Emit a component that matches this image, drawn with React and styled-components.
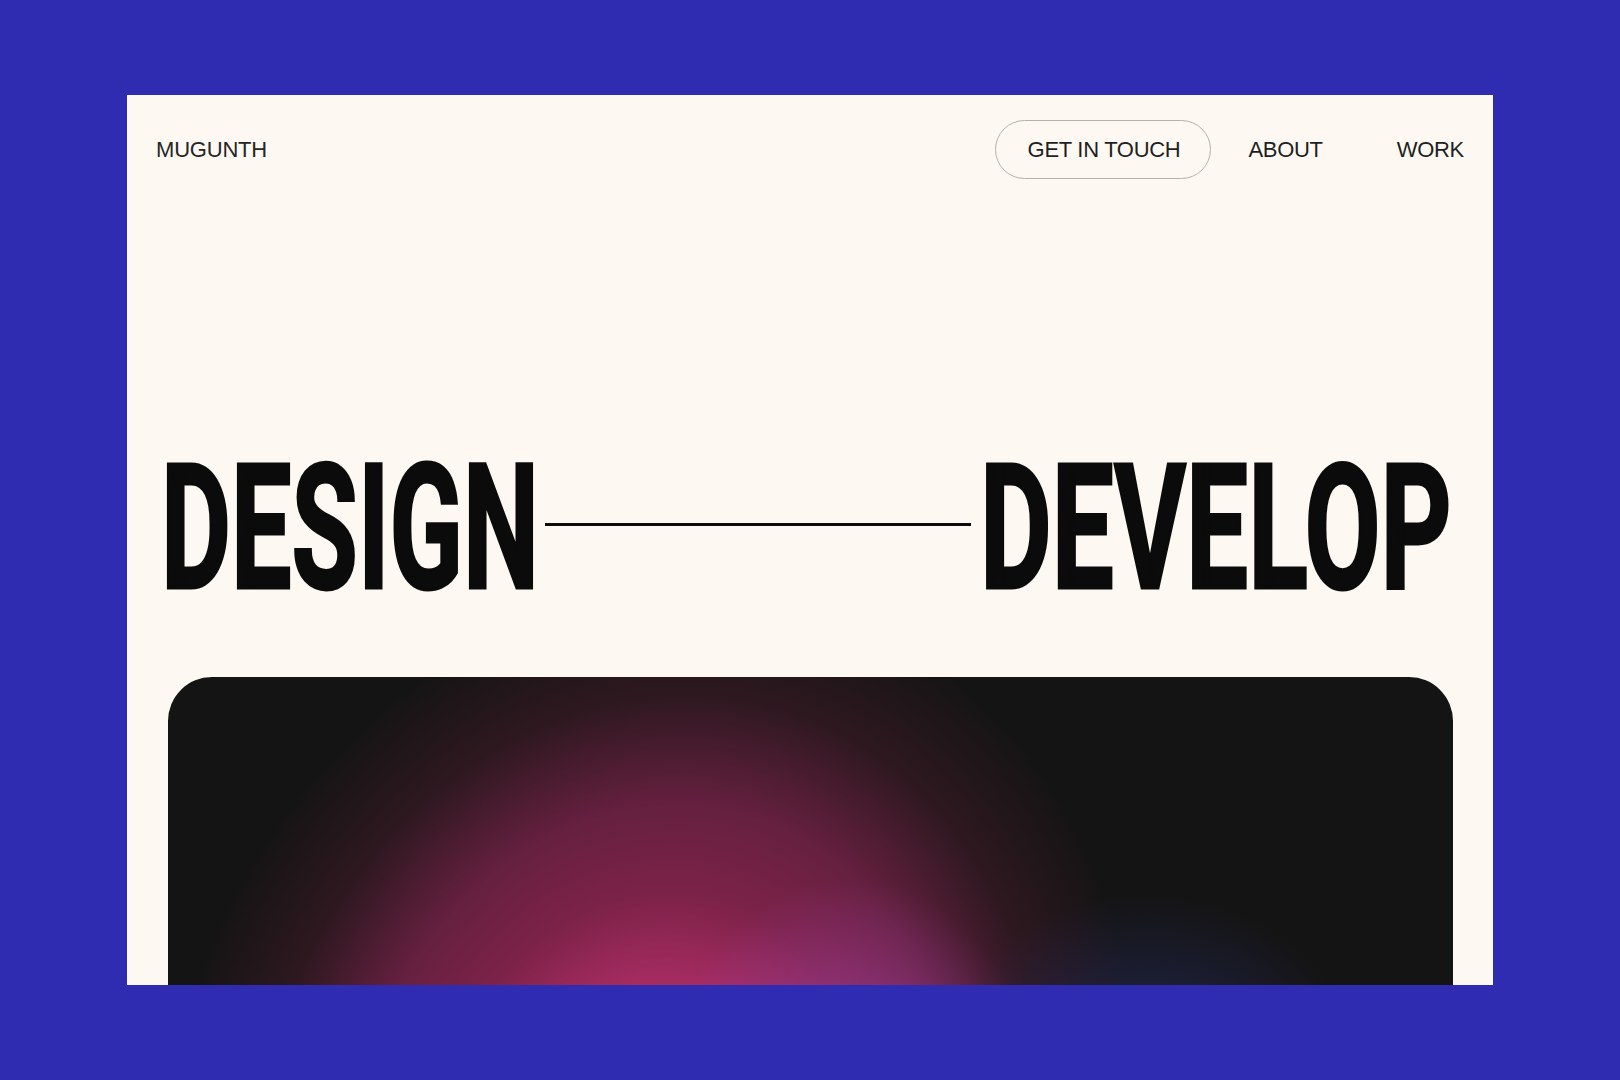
import { useLayoutEffect, useRef, useState } from "react";
import styled, { createGlobalStyle } from "styled-components";

const GlobalStyle = createGlobalStyle`
  html, body {
    margin: 0;
    padding: 0;
    background-color: #2f2cb1;
  }

  body {
    font-family: "Liberation Sans", Arial, sans-serif;
  }
`;

const Page = styled.div`
  box-sizing: border-box;
  width: 1620px;
  height: 1080px;
  padding: 95px 127px;
  background-color: #2f2cb1;
`;

const Card = styled.div`
  display: flex;
  flex-direction: column;
  height: 890px;
  background-color: #fdf9f2;
  overflow: hidden;
`;

const Header = styled.header`
  display: flex;
  align-items: center;
  justify-content: space-between;
  padding: 25px 29px 0 29px;
`;

const Logo = styled.a`
  font-size: 22px;
  letter-spacing: -0.2px;
  color: #262626;
  text-decoration: none;
`;

const Nav = styled.nav`
  display: flex;
  align-items: center;
`;

const PillLink = styled.a`
  box-sizing: border-box;
  display: flex;
  align-items: center;
  height: 59px;
  padding: 0 30px 0 32px;
  border: 1px solid #b9b1a8;
  border-radius: 30px;
  font-size: 22px;
  letter-spacing: -0.3px;
  color: #1f1f1f;
  text-decoration: none;
`;

const NavLink = styled.a`
  padding: 0 37px;
  font-size: 22px;
  letter-spacing: -0.3px;
  color: #1f1f1f;
  text-decoration: none;

  &:last-child {
    padding-right: 0;
  }
`;

const Headline = styled.h1`
  display: flex;
  align-items: center;
  margin: 262px 0 0;
  padding: 0 41px 0 34px;
`;

const WordBox = styled.span`
  display: block;
  flex: none;
  width: ${({ $width }) => $width}px;
  height: 176px;
  overflow: visible;
`;

const WordText = styled.span`
  display: inline-block;
  font-family: Roboto, "DejaVu Sans", sans-serif;
  font-weight: 700;
  font-size: 175px;
  line-height: 176px;
  color: #0b0b0b;
  white-space: nowrap;
  transform-origin: 0 0;
  -webkit-text-stroke: 3px #0b0b0b;
`;

const Rule = styled.span`
  flex: 1;
  height: 3px;
  margin: 0 9px 9px 6px;
  background-color: #0b0b0b;
`;

// dark showcase panel with the blurred colour glow, cut off by the card
const Showcase = styled.div`
  position: relative;
  flex: none;
  height: 600px;
  margin: 60px 40px 0 41px;
  border-radius: 44px 44px 0 0;
  background-color: #141414;
  overflow: hidden;

  /* pink glow, tilted so its top leans to the right */
  &::before {
    content: "";
    position: absolute;
    left: 0;
    top: -100px;
    width: 960px;
    height: 1120px;
    transform: rotate(20deg);
    background: radial-gradient(
      ellipse closest-side at 50% 50%,
      #cc3474 0%,
      #bb306d 20%,
      #7c2248 44%,
      #662040 60%,
      #2e1820 80%,
      rgba(20, 20, 20, 0) 100%
    );
  }

  /* violet edge and the faint blue patch on the right */
  &::after {
    content: "";
    position: absolute;
    inset: 0;
    background-image:
      radial-gradient(ellipse 280px 230px at 980px 390px, rgba(36, 40, 88, 0.9), rgba(20, 20, 20, 0) 75%),
      radial-gradient(ellipse 230px 260px at 680px 410px, rgba(165, 68, 175, 0.75), rgba(20, 20, 20, 0) 80%);
  }
`;

const Word = ({ children, width }) => {
  const textRef = useRef(null);
  const [scale, setScale] = useState(1);

  useLayoutEffect(() => {
    const measure = () => {
      if (textRef.current) {
        setScale(width / textRef.current.offsetWidth);
      }
    };
    measure();
    document.fonts?.ready.then(measure);
  }, [width]);

  return (
    <WordBox $width={width}>
      <WordText ref={textRef} style={{ transform: `scaleX(${scale})` }}>
        {children}
      </WordText>
    </WordBox>
  );
};

const App = () => {
  return (
    <Page>
      <GlobalStyle />
      <Card>
        <Header>
          <Logo href="#">MUGUNTH</Logo>
          <Nav>
            <PillLink href="#">GET IN TOUCH</PillLink>
            <NavLink href="#">ABOUT</NavLink>
            <NavLink href="#">WORK</NavLink>
          </Nav>
        </Header>

        <Headline>
          <Word width={378}>DESIGN</Word>
          <Rule />
          <Word width={472}>DEVELOP</Word>
        </Headline>

        <Showcase />
      </Card>
    </Page>
  );
};

export default App;
